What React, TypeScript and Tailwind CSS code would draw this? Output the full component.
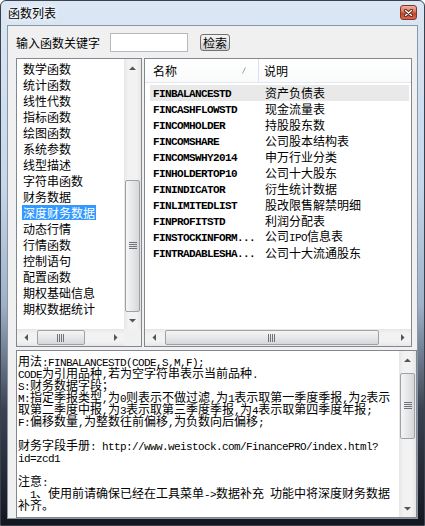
import React from "react";

const ASCII = /^[\x20-\x7e]+$/;

// mixed text: CJK at 12px, ascii runs in a 6px-wide mono face
function Mix({ text, bold }: { text: string; bold?: boolean }) {
  const parts = text.split(/([\x20-\x7e]+)/).filter((p) => p.length > 0);
  return (
    <>
      {parts.map((p, i) =>
        ASCII.test(p) ? (
          <span
            key={i}
            className={
              "font-['Liberation_Mono',monospace] text-[11px] tracking-[-0.6px]" +
              (bold ? " font-bold" : "")
            }
          >
            {p}
          </span>
        ) : (
          <span key={i}>{p}</span>
        )
      )}
    </>
  );
}

type Dir = "up" | "down" | "left" | "right";

function Arrow({ dir }: { dir: Dir }) {
  const vert = dir === "up" || dir === "down";
  const pts = {
    up: "0,4 7,4 3.5,0.5",
    down: "0,0 7,0 3.5,3.5",
    left: "4,0 4,7 0.5,3.5",
    right: "0,0 0,7 3.5,3.5",
  }[dir];
  return (
    <div className="w-[17px] h-[17px] shrink-0 flex items-center justify-center">
      <svg width={vert ? 7 : 4} height={vert ? 4 : 7}>
        <polygon points={pts} fill="#555" />
      </svg>
    </div>
  );
}

function GripV() {
  return (
    <svg width="8" height="8">
      {[0, 2, 4, 6].map((y) => (
        <line key={y} x1="0" y1={y + 0.5} x2="8" y2={y + 0.5} stroke="#6f7379" strokeWidth="1" />
      ))}
    </svg>
  );
}

function GripH() {
  return (
    <svg width="8" height="8">
      {[0, 2, 4, 6].map((x) => (
        <line key={x} x1={x + 0.5} y1="0" x2={x + 0.5} y2="8" stroke="#6f7379" strokeWidth="1" />
      ))}
    </svg>
  );
}

function VScroll({ before, thumb }: { before: number; thumb: number }) {
  return (
    <div className="w-[17px] h-full flex flex-col bg-[linear-gradient(90deg,#e6e6e6,#f2f2f2_25%,#f2f2f2_75%,#e6e6e6)]">
      <Arrow dir="up" />
      <div style={{ height: before }} className="shrink-0" />
      <div
        style={{ height: thumb }}
        className="shrink-0 mx-[1px] rounded-[2px] border border-[#9ea2a8] bg-[linear-gradient(90deg,#f5f5f5,#e6e7e8_50%,#d6d7d9)] flex items-center justify-center"
      >
        <GripV />
      </div>
      <div className="flex-1" />
      <Arrow dir="down" />
    </div>
  );
}

function HScroll({ before, thumb }: { before: number; thumb: number }) {
  return (
    <div className="h-[17px] flex-1 flex bg-[linear-gradient(180deg,#e6e6e6,#f2f2f2_25%,#f2f2f2_75%,#e6e6e6)]">
      <Arrow dir="left" />
      <div style={{ width: before }} className="shrink-0" />
      <div
        style={{ width: thumb }}
        className="shrink-0 my-[1px] rounded-[2px] border border-[#9ea2a8] bg-[linear-gradient(180deg,#f5f5f5,#e6e7e8_50%,#d6d7d9)] flex items-center justify-center"
      >
        <GripH />
      </div>
      <div className="flex-1" />
      <Arrow dir="right" />
    </div>
  );
}

const categories = [
  "数学函数",
  "统计函数",
  "线性代数",
  "指标函数",
  "绘图函数",
  "系统参数",
  "线型描述",
  "字符串函数",
  "财务数据",
  "深度财务数据",
  "动态行情",
  "行情函数",
  "控制语句",
  "配置函数",
  "期权基础信息",
  "期权数据统计",
];

const funcs = [
  ["FINBALANCESTD", "资产负债表"],
  ["FINCASHFLOWSTD", "现金流量表"],
  ["FINCOMHOLDER", "持股股东数"],
  ["FINCOMSHARE", "公司股本结构表"],
  ["FINCOMSWHY2014", "申万行业分类"],
  ["FINHOLDERTOP10", "公司十大股东"],
  ["FININDICATOR", "衍生统计数据"],
  ["FINLIMITEDLIST", "股改限售解禁明细"],
  ["FINPROFITSTD", "利润分配表"],
  ["FINSTOCKINFORM...", "公司IPO信息表"],
  ["FINTRADABLESHA...", "公司十大流通股东"],
];

const help = [
  "用法:FINBALANCESTD(CODE,S,M,F);",
  "CODE为引用品种,若为空字符串表示当前品种.",
  "S:财务数据字段；",
  "M:指定季报类型,为0则表示不做过滤,为1表示取第一季度季报,为2表示",
  "取第二季度中报,为3表示取第三季度季报,为4表示取第四季度年报;",
  "F:偏移数量,为整数往前偏移,为负数向后偏移;",
  "",
  "财务字段手册: http://www.weistock.com/FinancePRO/index.html?",
  "id=zcd1",
  "",
  "注意:",
  "  1、使用前请确保已经在工具菜单->数据补充 功能中将深度财务数据",
  "补齐。",
];

export default function App() {
  return (
    <div className="w-[425px] h-[526px] flex flex-col overflow-hidden rounded-t-[6px] border border-[#3a404c] bg-[linear-gradient(180deg,#dbe7f4_0%,#c6d7ea_35%,#9fb1c7_58%,#3a4252_78%,#15171e_100%)] font-['Noto_Sans_CJK_SC',sans-serif] text-[12px] text-black">
      {/* title bar */}
      <div className="h-[24px] shrink-0 flex items-center justify-between pl-[7px] pr-[7px]">
        <span className="leading-[14px] [text-shadow:0_0_5px_#ffffff,0_0_8px_#ffffff]">函数列表</span>
        <div className="self-start mt-[4px] w-[17px] h-[15px] rounded-[3px] border border-[#7f3527] bg-[linear-gradient(180deg,#eeb2a2_0%,#dc7459_45%,#c7432b_55%,#d8674f_100%)] flex items-center justify-center">
          <svg width="9" height="8">
            <path d="M1.5 1.5 L7.5 6.5 M7.5 1.5 L1.5 6.5" stroke="#4a1a12" strokeWidth="3" strokeLinecap="round" />
            <path d="M1.5 1.5 L7.5 6.5 M7.5 1.5 L1.5 6.5" stroke="#ffffff" strokeWidth="1.5" strokeLinecap="round" />
          </svg>
        </div>
      </div>

      {/* client area */}
      <div className="ml-[6px] w-[411px] h-[494px] shrink-0 border border-[#8796a8] bg-[#f0f0f0] flex flex-col">
        {/* search row */}
        <div className="mt-[7px] h-[19px] shrink-0 flex items-center pl-[8px]">
          <span className="leading-[14px]">输入函数关键字</span>
          <div className="ml-[10px] w-[78px] h-[19px] border border-[#b4b8bf] bg-white" />
          <div className="ml-[12px] w-[30px] h-[17px] rounded-[3px] border border-[#707070] bg-[linear-gradient(180deg,#f3f3f3_0%,#ebebeb_48%,#dcdcdc_52%,#cfcfcf_100%)] flex items-center justify-center leading-[13px]">
            检索
          </div>
        </div>

        {/* lists */}
        <div className="mt-[6px] h-[289px] shrink-0 flex pl-[8px] gap-[2px]">
          {/* category list */}
          <div className="w-[126px] h-full border border-[#828790] bg-white flex flex-col">
            <div className="flex-1 flex min-h-0">
              <div className="flex-1 pt-[1px] pl-[5px]">
                {categories.map((c) => (
                  <div key={c} className="h-[16px] flex items-center">
                    <span
                      className={
                        "px-[1px] leading-[15px] whitespace-nowrap " +
                        (c === "深度财务数据" ? "bg-[#3399ff] text-white" : "")
                      }
                    >
                      {c}
                    </span>
                  </div>
                ))}
              </div>
              <VScroll before={104} thumb={132} />
            </div>
            <div className="h-[17px] shrink-0 flex">
              <HScroll before={3} thumb={48} />
              <div className="w-[17px] h-[17px] bg-[#f0f0f0]" />
            </div>
          </div>

          {/* function list */}
          <div className="w-[268px] h-full border border-[#828790] bg-white flex flex-col">
            <div className="h-[24px] shrink-0 flex border-b border-[#e3e6ea] bg-[linear-gradient(180deg,#ffffff,#f9fafb)]">
              <div className="w-[114px] h-full flex items-center justify-between pl-[8px] pr-[12px] border-r border-[#dde1e6]">
                <span className="leading-[14px]">名称</span>
                <svg width="4" height="7">
                  <line x1="0.5" y1="6.5" x2="3.5" y2="0.5" stroke="#9aa3ad" strokeWidth="1" />
                </svg>
              </div>
              <div className="flex-1 h-full flex items-center pl-[5px]">
                <span className="leading-[14px]">说明</span>
              </div>
            </div>
            <div className="flex-1 pt-[2px]">
              {funcs.map(([n, d], i) => (
                <div
                  key={n}
                  className={
                    "h-[16px] ml-[5px] mr-[2px] flex items-center whitespace-pre " +
                    (i === 0 ? "bg-[#e9e9e9]" : "")
                  }
                >
                  <div className="w-[109px] pl-[3px] leading-[14px]">
                    <Mix text={n} bold />
                  </div>
                  <div className="pl-[6px] leading-[14px]">
                    <Mix text={d} />
                  </div>
                </div>
              ))}
            </div>
            <div className="h-[17px] shrink-0 flex">
              <HScroll before={3} thumb={214} />
            </div>
          </div>
        </div>

        {/* help text */}
        <div className="mt-[3px] ml-[8px] w-[401px] h-[168px] shrink-0 border border-[#828790] bg-white flex">
          <div className="flex-1 pl-[1px] pt-[4px]">
            {help.map((l, i) => (
              <div key={i} className="h-[12px] leading-[12px] whitespace-pre">
                <Mix text={l} />
              </div>
            ))}
          </div>
          <VScroll before={5} thumb={66} />
        </div>
      </div>
    </div>
  );
}
